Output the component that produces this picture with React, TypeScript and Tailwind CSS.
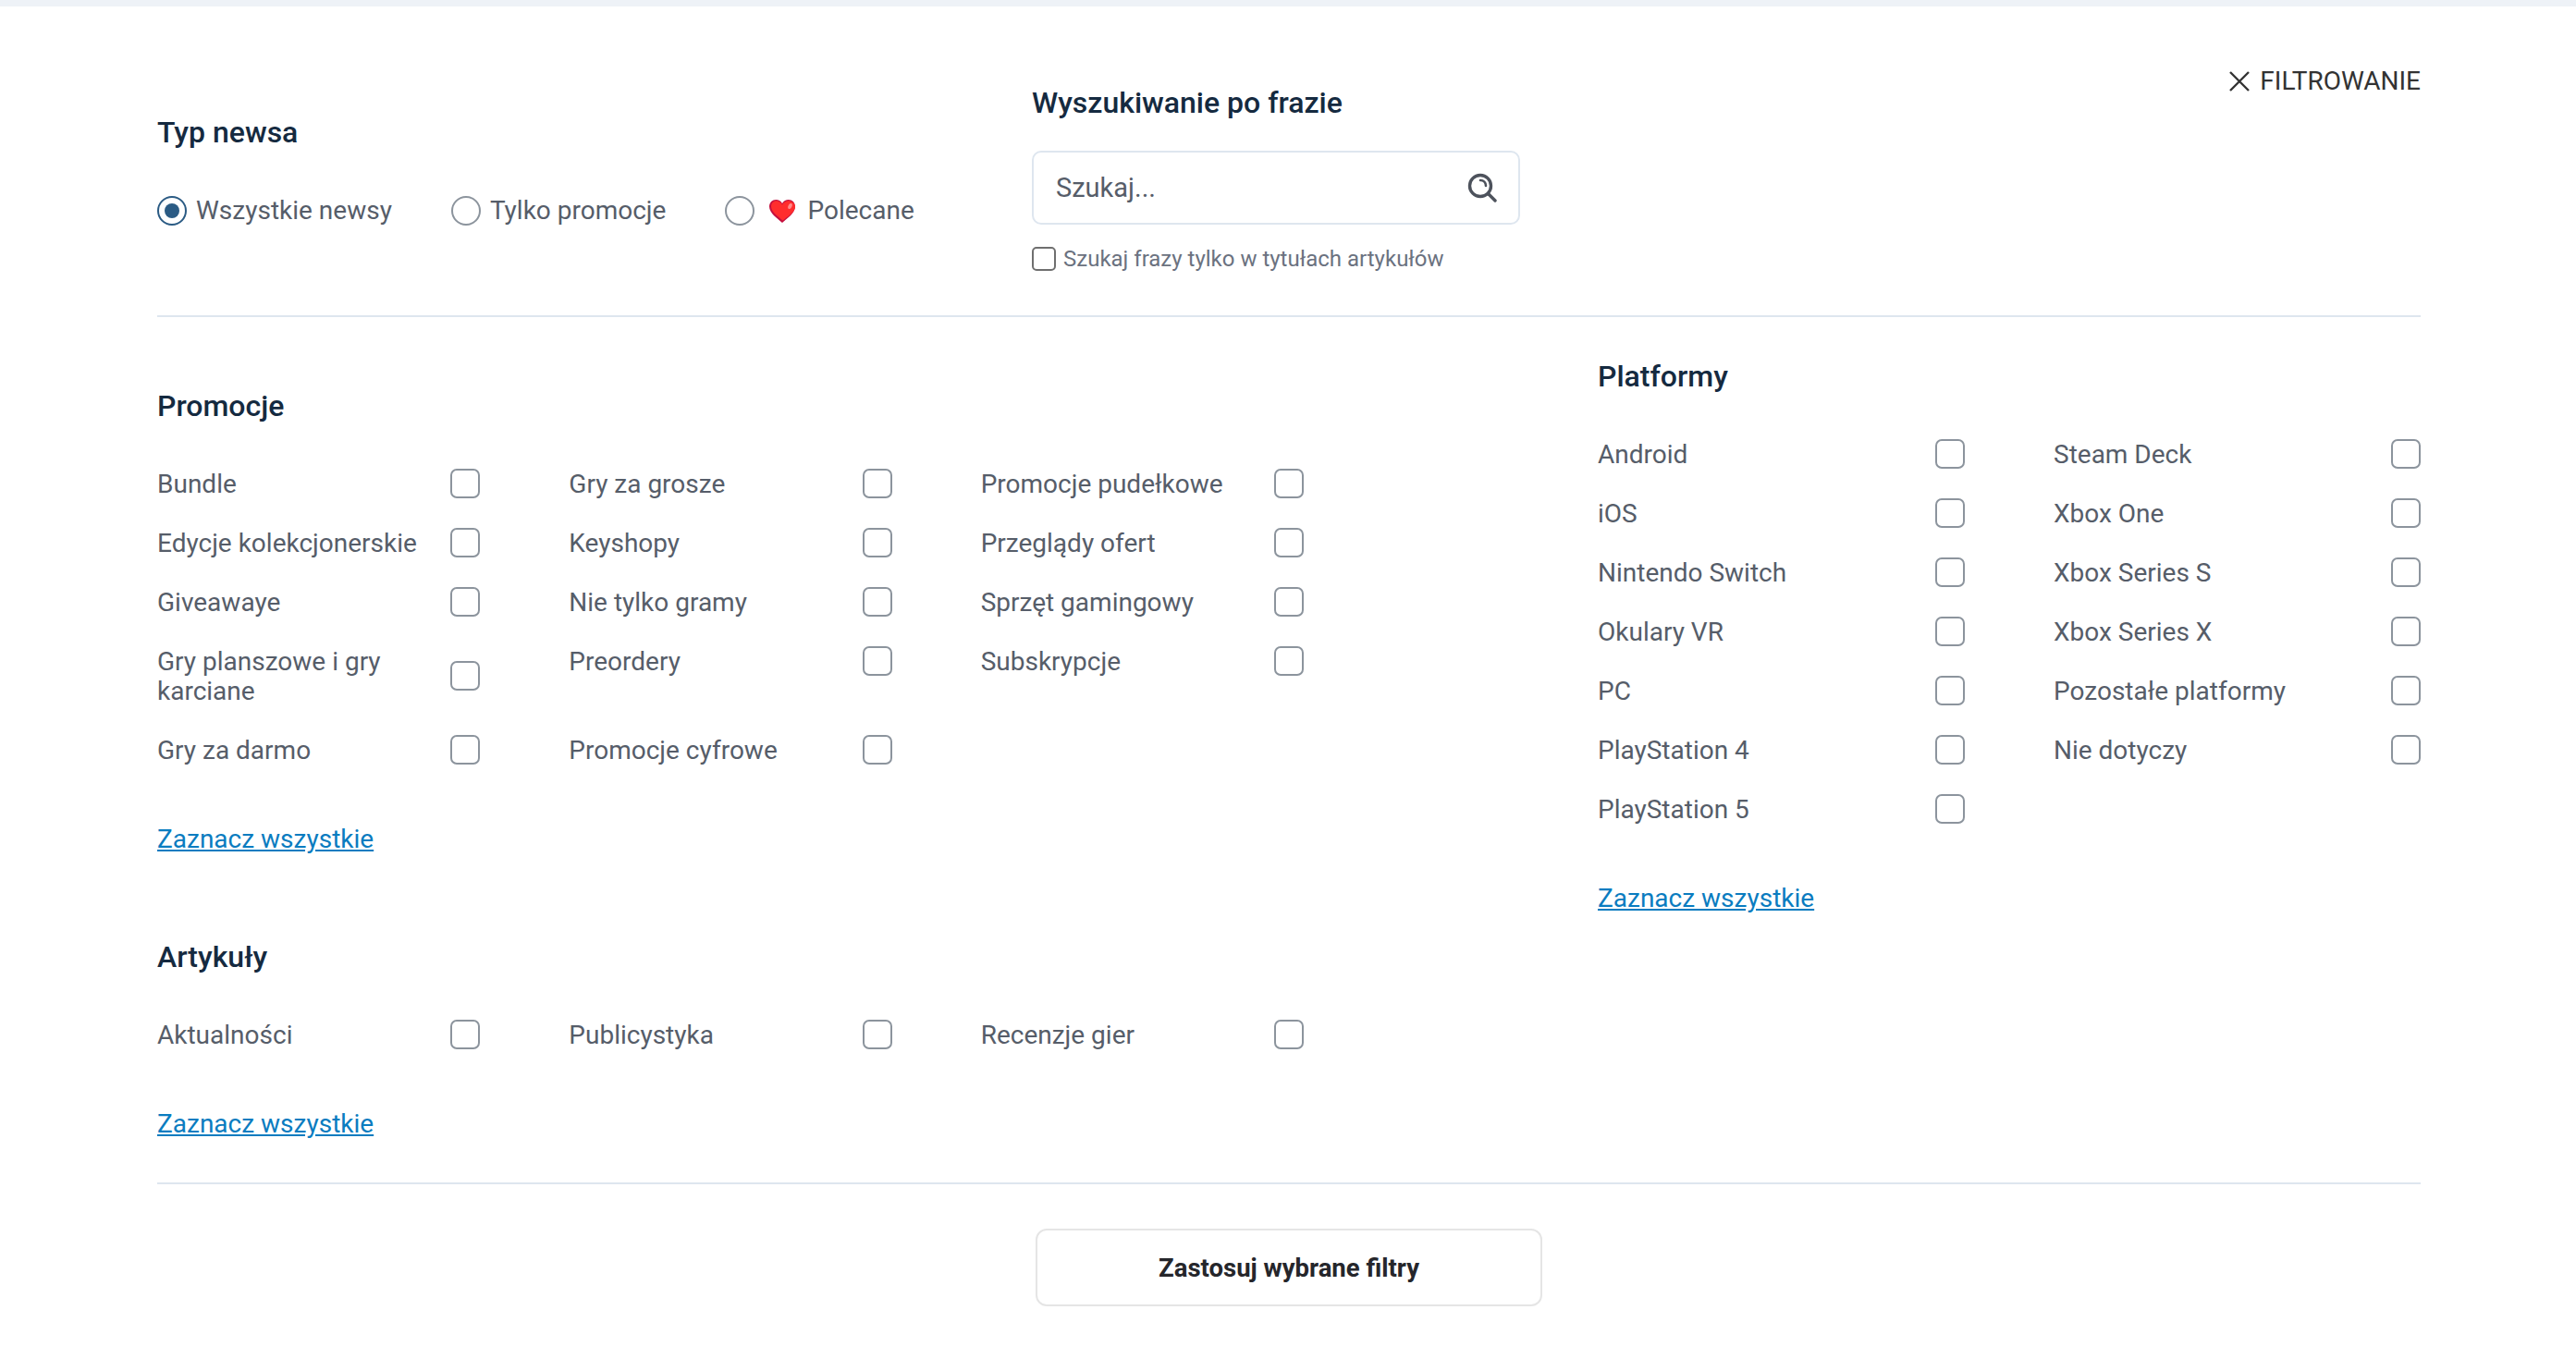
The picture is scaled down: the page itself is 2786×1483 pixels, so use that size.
const promocje = [
  "Bundle",
  "Gry za grosze",
  "Promocje pudełkowe",
  "Edycje kolekcjonerskie",
  "Keyshopy",
  "Przeglądy ofert",
  "Giveawaye",
  "Nie tylko gramy",
  "Sprzęt gamingowy",
  "Gry planszowe i gry karciane",
  "Preordery",
  "Subskrypcje",
  "Gry za darmo",
  "Promocje cyfrowe",
]

const artykuly = ["Aktualności", "Publicystyka", "Recenzje gier"]

const platformy = [
  "Android",
  "Steam Deck",
  "iOS",
  "Xbox One",
  "Nintendo Switch",
  "Xbox Series S",
  "Okulary VR",
  "Xbox Series X",
  "PC",
  "Pozostałe platformy",
  "PlayStation 4",
  "Nie dotyczy",
  "PlayStation 5",
]

function Heading({ children }: { children: React.ReactNode }) {
  return <h3 className="text-[32px] leading-[36px] font-medium text-[#152a40]">{children}</h3>
}

function CheckRow({ label }: { label: string }) {
  return (
    <label className="flex items-center justify-between gap-4">
      <span className="text-[28px] leading-[32px] text-[#565d69]">{label}</span>
      <span className="h-[32px] w-[32px] shrink-0 -translate-y-px rounded-[7px] border-2 border-[#8c949d] bg-white" />
    </label>
  )
}

function SelectAll() {
  return <a className="mt-[64px] block text-[28px] leading-[32px] text-[#0a7cc0] underline">Zaznacz wszystkie</a>
}

function Radio({ checked, children }: { checked?: boolean; children: React.ReactNode }) {
  return (
    <label className="flex items-center gap-[10px] text-[28px] leading-[32px] text-[#565d69]">
      {checked ? (
        <span className="flex h-[32px] w-[32px] items-center justify-center rounded-full border-2 border-[#2b5b84]">
          <span className="h-[16px] w-[16px] rounded-full bg-[#2b5b84]" />
        </span>
      ) : (
        <span className="h-[32px] w-[32px] rounded-full border-2 border-[#8c949d]" />
      )}
      {children}
    </label>
  )
}

function HeartIcon() {
  return (
    <svg viewBox="0 0 28 25" className="ml-[6px] mr-[3px] h-[25px] w-[28px]">
      <path d="M14 25C9 20.5 0 14.5 0 7.5 0 3 3.3 0 7.2 0 10 0 12.6 1.6 14 4 15.4 1.6 18 0 20.8 0 24.7 0 28 3 28 7.5 28 14.5 19 20.5 14 25Z" fill="#c4103f" />
      <path d="M14.6 22.5C10 18.5 2 13.5 2 7.2 2 3.8 4.6 1.2 7.6 1.2 10.4 1.2 12.8 3 14 5.5 15.4 3 17.8 1.2 20.6 1.2 24 1.2 28 3.6 28 7.5 28 13.6 19.5 18.6 14.6 22.5Z" fill="#ff2d2d" />
      <ellipse cx="22.5" cy="7" rx="2" ry="3.2" transform="rotate(25 22.5 7)" fill="#ff8a8a" />
    </svg>
  )
}

function SearchIcon() {
  return (
    <svg viewBox="0 0 32 32" className="h-[32px] w-[32px]" fill="none" stroke="#4d525c" strokeWidth="3.4" strokeLinecap="round">
      <circle cx="14" cy="14" r="11.5" />
      <path d="M23 23 30 30" />
      <path d="M14 8C17.5 8 20 10.5 20 14" strokeWidth="2.6" />
    </svg>
  )
}

export default function App() {
  return (
    <div className="min-h-[1483px] bg-white font-['Roboto',sans-serif]">
      <div className="h-[7px] bg-[#eef2f7]" />

      <div className="pl-[170px] pr-[168px]">
        {/* górna sekcja */}
        <section className="flex h-[336px] border-b-2 border-[#dee6ef]">
          <div className="w-[946px] pt-[118px]">
            <Heading>Typ newsa</Heading>
            <div className="mt-[51px] flex gap-[64px]">
              <Radio checked>Wszystkie newsy</Radio>
              <Radio>Tylko promocje</Radio>
              <Radio>
                <HeartIcon />
                Polecane
              </Radio>
            </div>
          </div>

          <div className="w-[528px] pt-[86px]">
            <Heading>Wyszukiwanie po frazie</Heading>
            <div className="mt-[34px] flex h-[80px] items-center justify-between rounded-[10px] border-2 border-[#dee6ef] pl-[24px] pr-[23px]">
              <span className="text-[29px] leading-[34px] text-[#565d69]">Szukaj...</span>
              <SearchIcon />
            </div>
            <label className="mt-[24px] flex items-center gap-[8px] text-[24px] leading-[26px] text-[#6b7280]">
              <span className="h-[26px] w-[26px] rounded-[5px] border-2 border-[#6f6f6f]" />
              Szukaj frazy tylko w tytułach artykułów
            </label>
          </div>

          <div className="ml-auto flex items-center gap-[10px] self-start pt-[65px] text-[28px] leading-[32px] text-[#333333]">
            <svg viewBox="0 0 24 24" className="h-[24px] w-[24px]" fill="none" stroke="#333333" strokeWidth="2.4">
              <path d="M2 2 22 22M22 2 2 22" />
            </svg>
            FILTROWANIE
          </div>
        </section>

        {/* filtry */}
        <section className="flex justify-between border-b-2 border-[#dee6ef] pb-[47px] pt-[46px]">
          <div className="w-[1240px] pt-[32px]">
            <Heading>Promocje</Heading>
            <div className="mt-[51px] grid grid-cols-3 items-start gap-x-[96px] gap-y-[32px]">
              {promocje.map(label => (
                <CheckRow key={label} label={label} />
              ))}
            </div>
            <SelectAll />

            <div className="mt-[93px]">
              <Heading>Artykuły</Heading>
            </div>
            <div className="mt-[51px] grid grid-cols-3 items-start gap-x-[96px] gap-y-[32px]">
              {artykuly.map(label => (
                <CheckRow key={label} label={label} />
              ))}
            </div>
            <SelectAll />
          </div>

          <div className="w-[890px]">
            <Heading>Platformy</Heading>
            <div className="mt-[51px] grid grid-cols-2 items-start gap-x-[96px] gap-y-[32px]">
              {platformy.map(label => (
                <CheckRow key={label} label={label} />
              ))}
            </div>
            <SelectAll />
          </div>
        </section>

        <div className="flex justify-center pt-[48px]">
          <button className="h-[84px] w-[548px] rounded-[12px] border-2 border-[#e5e5e5] bg-white pt-px text-[27.5px] font-bold text-[#25262b]">
            Zastosuj wybrane filtry
          </button>
        </div>
      </div>
    </div>
  )
}
